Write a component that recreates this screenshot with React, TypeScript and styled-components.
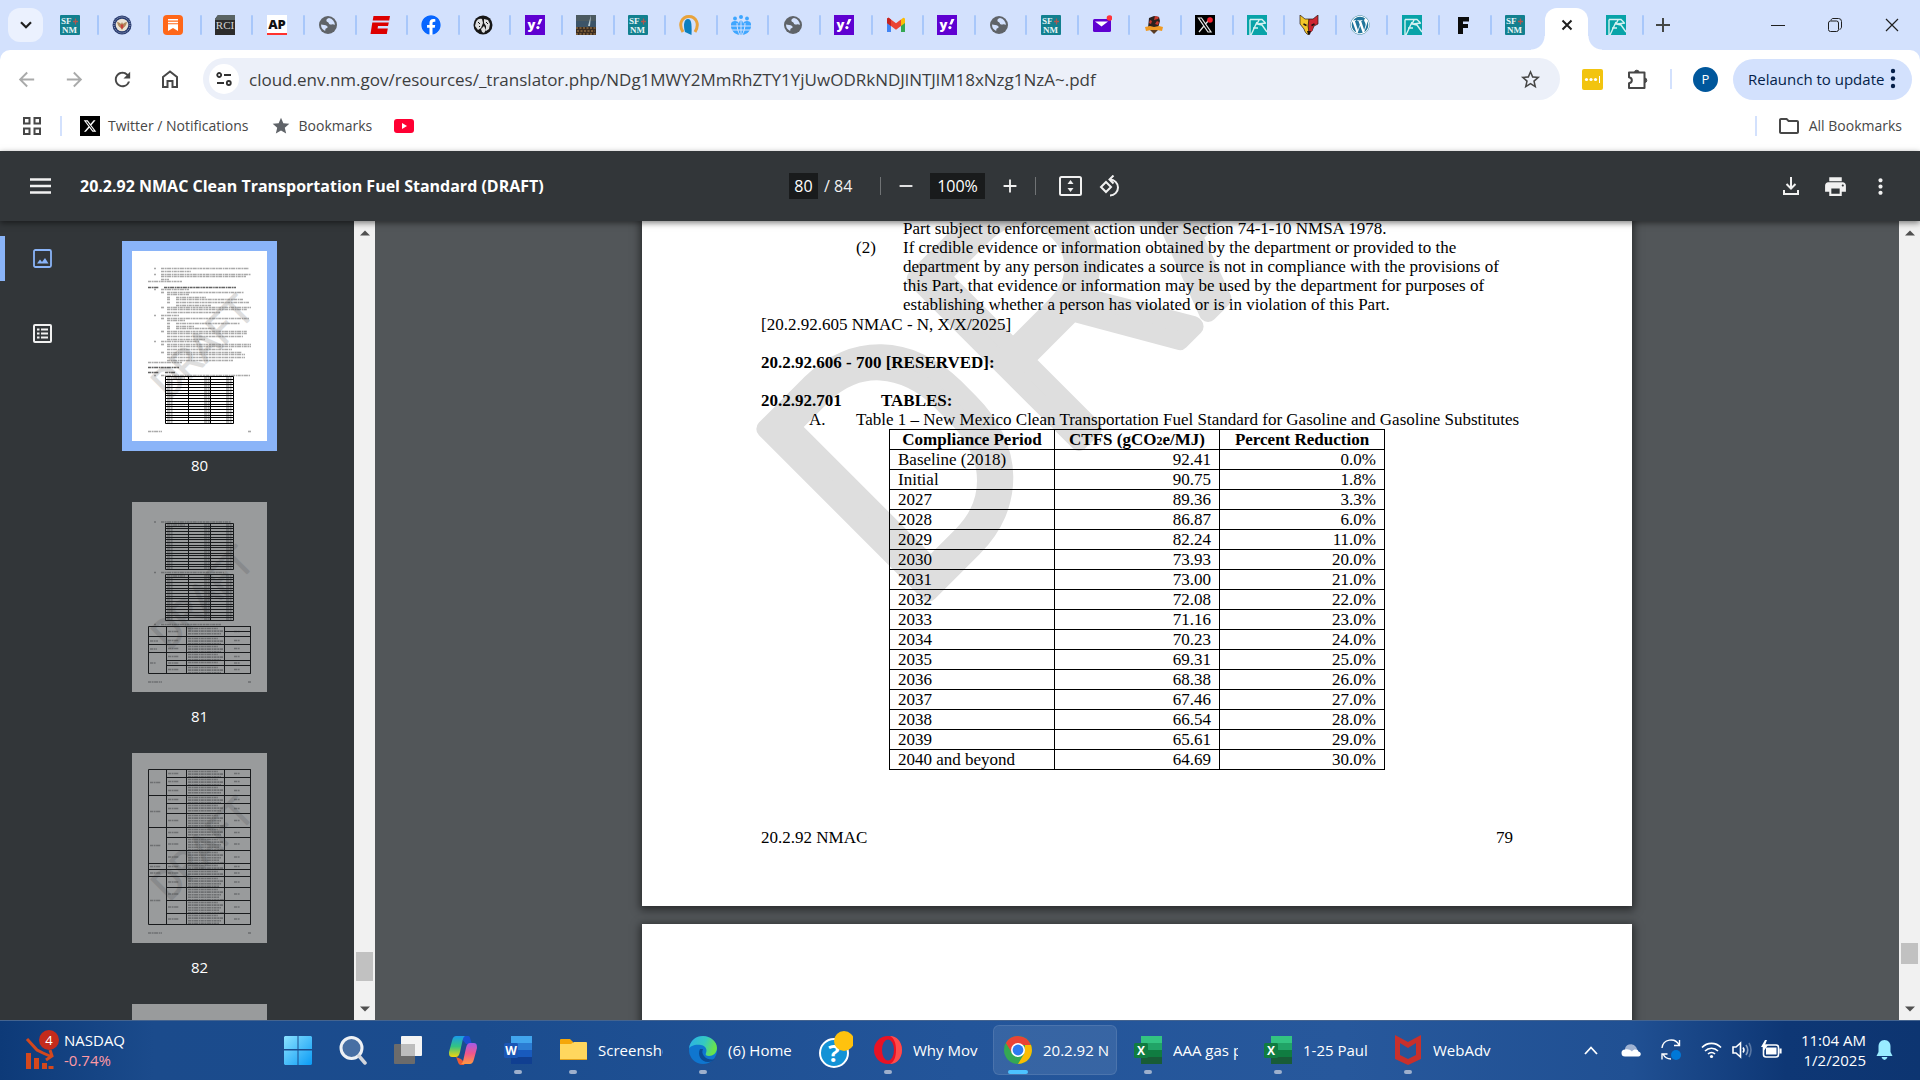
import React from 'react';
import styled, { createGlobalStyle, css } from 'styled-components';
import {
  MdArrowBack,
  MdArrowForward,
  MdRefresh,
  MdStar,
  MdStarBorder,
  MdAdd,
  MdRemove,
  MdMoreVert,
  MdOutlineFolder,
  MdPrint,
} from 'react-icons/md';
import { FaFacebook, FaWordpress } from 'react-icons/fa';
import { FaXTwitter } from 'react-icons/fa6';

const ui = '"Open Sans", "Noto Sans", sans-serif';
const serif = '"Liberation Serif", "Times New Roman", serif';

const GlobalStyle = createGlobalStyle`
  * { box-sizing: border-box; }
  body { margin: 0; font-family: ${ui}; overflow: hidden; }
  button { border: 0; padding: 0; background: none; color: inherit; font: inherit; }
  input { border: 0; padding: 0; margin: 0; font: inherit; color: inherit; outline: none; min-width: 0; }
  a { color: inherit; text-decoration: none; }
  svg { display: block; flex: none; }
`;

const Shell = styled.div`
  display: flex;
  flex-direction: column;
  height: 100vh;
  background: #d3e1fd;
`;

/* ---------- tab strip ---------- */

const TabStrip = styled.header`
  display: flex;
  align-items: flex-end;
  flex: none;
  height: 50px;
`;

const TabSearch = styled.button`
  display: grid;
  place-items: center;
  width: 35px;
  height: 34px;
  margin: 0 4px 8px 8px;
  border-radius: 12px;
  background: #ebf1fe;
`;

const Tabs = styled.nav`
  display: flex;
  flex: 0 1 1597px;
  height: 42px;
`;

const Tab = styled.button<{ $active?: boolean; $divider?: boolean }>`
  position: relative;
  display: flex;
  flex: 1 1 0;
  justify-content: center;
  padding-top: 7px;
  padding-right: 5px;

  ${(p) =>
    p.$divider &&
    css`
      &::after {
        content: '';
        position: absolute;
        right: 0;
        top: 7px;
        width: 2px;
        height: 20px;
        border-radius: 1px;
        background: #a8c7fa;
      }
    `}

  ${(p) =>
    p.$active &&
    css`
      flex: 0 0 43px;
      margin: 0 4px 0 2px;
      padding-right: 0;
      border-radius: 12px 12px 0 0;
      background: #fff;

      &::before,
      &::after {
        content: '';
        position: absolute;
        bottom: 0;
        width: 14px;
        height: 14px;
      }
      &::before {
        right: 100%;
        background: radial-gradient(circle at 0 0, transparent 13px, #fff 14px);
      }
      &::after {
        left: 100%;
        background: radial-gradient(circle at 100% 0, transparent 13px, #fff 14px);
      }
    `}
`;

const NewTab = styled.button`
  display: grid;
  place-items: center;
  width: 38px;
  height: 50px;
  color: #444746;
`;

const WindowButtons = styled.div`
  display: flex;
  margin-left: auto;
`;

const WindowButton = styled.button`
  display: grid;
  place-items: center;
  width: 57px;
  height: 50px;
`;

/* ---------- address bar and bookmarks ---------- */

const Chrome = styled.div`
  flex: none;
  height: 101px;
  background: #fff;
  border-radius: 10px 10px 0 0;
`;

const AddressRow = styled.div`
  display: flex;
  align-items: center;
  height: 58px;
  padding: 0 8px 0 2px;
  color: #474747;
`;

const NavButton = styled.button<{ $faded?: boolean }>`
  display: grid;
  place-items: center;
  width: 48px;
  height: 40px;
  color: ${(p) => (p.$faded ? '#a9aaaa' : '#474747')};
`;

const Omnibox = styled.div`
  display: flex;
  align-items: center;
  flex: 1;
  height: 42px;
  margin-left: 9px;
  padding: 0 18px 0 6px;
  border-radius: 21px;
  background: #ecf0f9;
`;

const SiteInfo = styled.button`
  display: grid;
  place-items: center;
  flex: none;
  width: 30px;
  height: 30px;
  border-radius: 50%;
  background: #fff;
`;

const Address = styled.input`
  flex: 1;
  height: 30px;
  margin-left: 10px;
  background: none;
  font-size: 17px;
  color: #3c3e40;
`;

const Tools = styled.div`
  display: flex;
  align-items: center;
  margin-left: 10px;
`;

const ToolButton = styled.button`
  display: grid;
  place-items: center;
  width: 45px;
  height: 40px;
`;

const Rule = styled.span<{ $space: string }>`
  flex: none;
  width: 2px;
  height: 20px;
  margin: ${(p) => p.$space};
  background: #d3e1fd;
`;

const Avatar = styled.button`
  width: 25px;
  height: 25px;
  border-radius: 50%;
  background: #00579c;
  color: #fff;
  font-size: 13px;
`;

const Relaunch = styled.button`
  display: flex;
  align-items: center;
  justify-content: space-between;
  width: 179px;
  height: 41px;
  margin-left: 15px;
  padding: 0 10px 0 15px;
  border-radius: 21px;
  background: #d3e1fd;
  color: #041e49;
  font-size: 15px;
  white-space: nowrap;
`;

const BookmarkRow = styled.div`
  display: flex;
  align-items: center;
  height: 36px;
  padding: 0 18px 0 23px;
  color: #474747;
  font-size: 14px;
  line-height: 20px;
`;

const Bookmark = styled.a`
  display: flex;
  align-items: center;
  gap: 8px;
  margin-right: 22px;

  &:last-child {
    margin-right: 0;
  }
`;

const Push = styled.span`
  flex: 1;
`;

/* ---------- pdf viewer ---------- */

const PdfToolbar = styled.div`
  position: relative;
  z-index: 2;
  display: grid;
  grid-template-columns: 1fr auto 1fr;
  align-items: center;
  flex: none;
  height: 70px;
  padding: 0 17px 0 29px;
  background: #323639;
  box-shadow: 0 2px 6px rgba(0, 0, 0, 0.5);
  color: #f1f1f1;
`;

const ToolbarLeft = styled.div`
  display: flex;
  align-items: center;
  gap: 27px;
`;

const DocTitle = styled.h1`
  margin: 0;
  font-size: 16px;
  font-weight: 700;
  line-height: 24px;
  white-space: nowrap;
  color: #fff;
`;

const ToolbarMiddle = styled.div`
  display: flex;
  align-items: center;
  margin-right: 13px;
  font-size: 16px;
`;

const ToolbarRight = styled.div`
  display: flex;
  justify-content: flex-end;
`;

const DarkField = styled.input<{ $w: number }>`
  width: ${(p) => p.$w}px;
  height: 26px;
  background: #191b1c;
  color: #fff;
  text-align: center;
`;

const PageTotal = styled.span`
  width: 36px;
  margin-left: 6px;
  white-space: nowrap;
`;

const DarkRule = styled.span<{ $space: string }>`
  width: 1px;
  height: 18px;
  margin: ${(p) => p.$space};
  background: #707375;
`;

const PdfButton = styled.button<{ $w?: number }>`
  display: grid;
  place-items: center;
  width: ${(p) => p.$w ?? 45}px;
  height: 40px;
`;

const Viewer = styled.div`
  display: flex;
  flex: 1;
  min-height: 0;
  background: #525659;
`;

const Sidebar = styled.aside`
  display: flex;
  flex: none;
  width: 354px;
  background: #323639;
  overflow: hidden;
`;

const SideTabs = styled.div`
  display: flex;
  flex-direction: column;
  gap: 30px;
  width: 80px;
  padding-top: 15px;
`;

const SideTab = styled.button<{ $on?: boolean }>`
  display: grid;
  place-items: center;
  height: 45px;
  color: ${(p) => (p.$on ? '#8ab4f8' : '#f1f1f1')};
  border-left: 5px solid ${(p) => (p.$on ? '#8ab4f8' : 'transparent')};
  border-radius: 0 4px 4px 0;
`;

const Thumbs = styled.div`
  display: flex;
  flex-direction: column;
  align-items: center;
  width: 239px;
  padding-top: 30px;
`;

const Thumb = styled.button<{ $on?: boolean }>`
  display: flex;
  flex-direction: column;
  align-items: center;
  flex: none;
  height: 251px;
  color: #fff;
  font-size: 15px;
  line-height: 20px;

  svg {
    margin-bottom: 14px;
    background: #fff;
    outline: ${(p) => (p.$on ? '10px solid #8ab4f8' : 'none')};
    opacity: ${(p) => (p.$on ? 1 : 0.5)};
  }
`;

const Scrollbar = styled.div`
  display: flex;
  flex-direction: column;
  align-items: center;
  flex: none;
  width: 21px;
  padding: 9px 0 8px;
  background: #f1f1f1;
`;

const Handle = styled.div<{ $h: number; $below: number }>`
  width: 17px;
  height: ${(p) => p.$h}px;
  margin-top: auto;
  margin-bottom: ${(p) => p.$below}px;
  background: #c1c1c1;
`;

const Pages = styled.main`
  display: flex;
  flex-direction: column;
  align-items: center;
  gap: 18px;
  flex: 1;
  overflow: hidden;
`;

const Sheet = styled.section`
  position: relative;
  flex: none;
  width: 990px;
  background: #fff;
  box-shadow: 0 2px 8px 2px rgba(0, 0, 0, 0.5);
  color: #000;
  font-family: ${serif};
  font-size: 17px;
  line-height: 19px;
`;

const TextSheet = styled(Sheet)`
  margin-top: -2px;
  padding: 0 119px 59px;
`;

const BlankSheet = styled(Sheet)`
  height: 400px;
`;

const Mark = styled.svg`
  position: absolute;
  left: 0;
  top: 0;
  overflow: hidden;
`;

const Copy = styled.div`
  position: relative;
`;

const Item = styled.div<{ $indent: number; $label: number }>`
  display: grid;
  grid-template-columns: ${(p) => p.$label}px 1fr;
  margin-left: ${(p) => p.$indent}px;
  white-space: nowrap;
`;

const Para = styled.p`
  margin: 0;
`;

const Citation = styled(Para)`
  padding-top: 1px;
`;

const Heading = styled.h2`
  display: flex;
  margin: 19px 0 0;
  font-size: 17px;
  line-height: 19px;

  span {
    width: 120px;
  }
`;

const DataTable = styled.table`
  margin: 0 0 58px 128px;
  width: 496px;
  border-collapse: collapse;
  table-layout: fixed;

  th,
  td {
    height: 20px;
    padding: 0 8px;
    border: 1px solid #000;
    line-height: 19px;
    text-align: right;
    white-space: nowrap;
  }
  th {
    text-align: center;
  }
  td:first-child {
    text-align: left;
  }
`;

const Sub = styled.span`
  font-size: 12px;
  line-height: 1;
`;

const PageFooter = styled.footer`
  display: flex;
  justify-content: space-between;
`;

/* ---------- taskbar ---------- */

const Taskbar = styled.footer`
  position: relative;
  z-index: 3;
  display: flex;
  align-items: center;
  flex: none;
  height: 60px;
  padding-bottom: 1px;
  border-top: 1px solid #45648f;
  background: linear-gradient(90deg, #0d3a78 0, #1b4b8c 8%, #1b4c8e 25%, #23559a 50%, #27589c 70%, #205093 85%, #0e3775 93%, #0d3571 100%);
  color: #fff;
  font-size: 15px;
  line-height: 20px;
`;

const Widget = styled.button`
  display: flex;
  align-items: center;
  gap: 4px;
  flex: none;
  width: 271px;
  padding-left: 24px;
  text-align: left;
`;

const Drop = styled.span`
  display: block;
  color: #ff99a4;
`;

const Apps = styled.div`
  display: flex;
  flex: 1;
  min-width: 0;
`;

const AppButton = styled.button<{ $active?: boolean; $running?: boolean; $wide?: boolean }>`
  position: relative;
  display: flex;
  align-items: center;
  gap: 11px;
  flex: none;
  width: ${(p) => (p.$wide ? 130 : 55)}px;
  height: 50px;
  padding: 0 13px;
  text-align: left;

  ${(p) =>
    p.$running &&
    css`
      &::after {
        content: '';
        position: absolute;
        left: 23px;
        bottom: 1px;
        width: 8px;
        height: 4px;
        border-radius: 2px;
        background: #9eb0cd;
      }
    `}

  ${(p) =>
    p.$active &&
    css`
      width: 124px;
      margin: 0 4px 0 2px;
      padding: 0 5px 0 11px;
      border-radius: 6px;
      background: rgba(255, 255, 255, 0.09);
      box-shadow: inset 0 0 0 1px rgba(255, 255, 255, 0.1);

      &::after {
        left: 15px;
        width: 20px;
        background: #4cc2ff;
      }
    `}
`;

const AppLabel = styled.span`
  width: 66px;
  overflow: hidden;
  white-space: nowrap;
`;

const Tray = styled.div`
  display: flex;
  align-items: center;
  gap: 10px;
  padding-right: 27px;
`;

const TrayButton = styled.button<{ $w: number }>`
  display: grid;
  place-items: center;
  width: ${(p) => p.$w}px;
  height: 40px;
`;

const Clock = styled.button`
  width: 68px;
  text-align: right;
  white-space: nowrap;
`;

/* ---------- favicons ---------- */

const Fav = ({ children }: { children: React.ReactNode }) => (
  <svg width="20" height="20" viewBox="0 0 20 20" aria-hidden="true">
    {children}
  </svg>
);

const SfNm = () => (
  <Fav>
    <rect width="20" height="20" rx="1" fill="#12808f" />
    <text x="1" y="9" fontFamily={serif} fontWeight="700" fontSize="9" fill="#e7f4f5">SF</text>
    <text x="2" y="18" fontFamily={serif} fontWeight="700" fontSize="9" fill="#e7f4f5">NM</text>
    <path d="M15.500 3.500v6M13 6.500h5" stroke="#b0574f" strokeWidth="1.300" />
  </Fav>
);

const Seal = () => (
  <Fav>
    <circle cx="10" cy="10" r="9.500" fill="#26396d" />
    <circle cx="10" cy="10" r="8" fill="none" stroke="#aeb6cf" strokeWidth="1" strokeDasharray="1 1" />
    <circle cx="10" cy="10" r="6.300" fill="#ebe4d5" />
    <path d="M5 7c2 0 3 1 4 2l1-2 1 2c1-1 2-2 4-2-1 4-2 5-3.500 5.500L10 15l-1.500-2.500C7 12 6 11 5 7z" fill="#b08a5c" />
    <path d="M8.700 9.500h2.600v3L10 14l-1.300-1.500z" fill="#c8433c" />
  </Fav>
);

const Substack = () => (
  <Fav>
    <rect width="20" height="20" rx="4" fill="#ff6719" />
    <path d="M5 4.700h10M5 7.500h10" stroke="#fff" strokeWidth="1.400" />
    <path d="M5 9.300h10V16l-5-2.900L5 16z" fill="#fff" />
  </Fav>
);

const Rci = () => (
  <Fav>
    <path d="M3 0h17v20H0V4z" fill="#2c2c2c" />
    <path d="M3 0h17v5H0V4z" fill="#5a6464" />
    <text x="10" y="14" textAnchor="middle" fontFamily={serif} fontSize="11" fill="#d5d5d5">RCI</text>
  </Fav>
);

const Ap = () => (
  <Fav>
    <rect width="20" height="20" fill="#fff" />
    <text x="10" y="13.500" textAnchor="middle" fontFamily={ui} fontWeight="800" fontSize="13" fill="#111">AP</text>
    <rect y="18" width="20" height="2" fill="#ff322e" />
  </Fav>
);

const Globe = () => (
  <Fav>
    <circle cx="10" cy="10" r="9" fill="#5f6368" />
    <path
      d="M11 3c-2 .5-3 1.500-2.500 3 .3 1.200 2 1 2.300 2.200.4 1.500 2 1.600 3.200 1.200 1-.4 2 .2 2.800.6A7 7 0 0 0 11 3zM3 9.500c2 .2 4.500.5 6 1.500 1.200.8.6 2-.6 2.300-1 .3-1.200 1.400-1.200 2.600A7 7 0 0 1 3 9.500z"
      fill="#d3e1fd"
    />
  </Fav>
);

const Espn = () => (
  <Fav>
    <path d="M3.500 1H20l-.8 4.500H2.700zM2.300 7.500h16.500L18 11H8l-.4 2.500h10.200L16.800 19H.5z" fill="#d00" />
  </Fav>
);

const Disc = styled.span`
  width: 20px;
  height: 20px;
  border-radius: 50%;
  background: #fff;
`;

const Facebook = () => (
  <Disc>
    <FaFacebook size={20} color="#0866ff" />
  </Disc>
);

const Face = () => (
  <Fav>
    <circle cx="10" cy="10" r="9.500" fill="#161616" />
    <path d="M3 7c1-3 4-4 6-3l1 4-2 5-3 2-3-4zM11 4l4 1 2 4-1 5-3 2 0-5-2-3zM8 14l3-3 2 4-2 3-2-1z" fill="#dedede" />
    <path d="M5 7l2 2M6 11l1 1M13 7l2 2" stroke="#111" />
  </Fav>
);

const Yahoo = () => (
  <Fav>
    <rect width="20" height="20" fill="#5f01d1" />
    <text x="2.500" y="13.500" fontFamily={ui} fontWeight="800" fontSize="13" fill="#fff">y</text>
    <path d="M12.300 9.500L14.500 4h3l-2.600 5.500z" fill="#fff" />
    <circle cx="12.900" cy="12.600" r="1.600" fill="#fff" />
  </Fav>
);

const Photo = () => (
  <Fav>
    <rect width="20" height="20" fill="#3c5468" />
    <rect width="20" height="6" fill="#4c5a60" />
    <path d="M15 0l-3 11h2z" fill="#b9cbd2" />
    <rect y="12" width="20" height="8" fill="#3a2c20" />
    <path d="M0 13h20M1 16h18M0 19h20" stroke="#8a683f" strokeWidth="1.300" strokeDasharray="2 1.500" />
  </Fav>
);

const Arch = () => (
  <Fav>
    <path d="M4 17C-1 9 3 1.500 10 1.500s11 7.500 6 15.500" fill="none" stroke="#e8a33c" strokeWidth="3" />
    <path d="M6 17C4 10 5 4 9 4c3 0 4 3 3.500 16z" fill="#0b7fc0" />
  </Fav>
);

const PeopleGlobe = () => (
  <Fav>
    <g fill="#3ea6ff">
      <circle cx="4" cy="3.500" r="1.900" />
      <circle cx="10" cy="2" r="2" />
      <circle cx="16" cy="3.500" r="1.900" />
      <path d="M0 9c0-4 8-4 8 0 0-5 4-5 4 0 0-4 8-4 8 0v3c-1 5-5 8-10 8S1 17 0 12z" />
    </g>
    <path d="M0 11h20M1 15h18M6 8c0 5 1 9 3 12M14 8c0 5-1 9-3 12M10 5v15" stroke="#d3e1fd" strokeWidth="1" fill="none" />
  </Fav>
);

const Gmail = () => (
  <Fav>
    <path d="M1 5v12h4V8z" fill="#4285f4" />
    <path d="M19 5v12h-4V8z" fill="#34a853" />
    <path d="M15 4.500L17 3c1-.7 2 .2 2 1.500V8l-4 3z" fill="#fbbc04" />
    <path d="M1 4.500C1 3.200 2 2.300 3 3l7 5.300L17 3l-2 1.500V11l-5 3.700L5 11 1 8z" fill="#ea4335" />
    <path d="M1 4.500V8l4 3V4.500L3 3c-1-.7-2 .2-2 1.500z" fill="#c5221f" />
  </Fav>
);

const Mail = () => (
  <Fav>
    <rect x="1" y="4" width="18" height="13" rx="1.500" fill="#5f01d1" />
    <path d="M3 6.500h13l-6.500 5z" fill="#fff" />
    <circle cx="17.500" cy="3" r="2.800" fill="#ff333a" />
  </Fav>
);

const Knight = () => (
  <Fav>
    <path d="M5 3l5-2 5 1 1 4-2 7H4z" fill="#2a2220" />
    <path d="M11 1l4 1-1 2-4 1zM13 6l2 1-1 3-3-1zM6 5l2 1-1 3-2-1z" fill="#c8382b" />
    <path d="M1 12l5-1 4 1 5-1 4 1-1 4-5-1H7l-5 1z" fill="#f09a22" />
    <path d="M6 15h8l-4 4z" fill="#5b3d24" />
  </Fav>
);

const XTab = () => (
  <Fav>
    <rect width="20" height="20" fill="#000" />
    <path d="M3.500 3h3l9.500 14h-3zM15.500 3L11 8.500M8.500 11.500L4 17" fill="none" stroke="#e9e9e9" strokeWidth="1.200" />
    <circle cx="15" cy="5" r="2.800" fill="#f4212e" />
  </Fav>
);

const Teal = () => (
  <Fav>
    <rect width="20" height="20" fill="#08a3a8" />
    <path d="M3 4.500h12l3 3M3 4.500V20M10 7L4 20M6 13h5M12 5l-2 4 5 1 5 7M11 9l8-1" fill="none" stroke="#d5f1f1" strokeWidth="1.400" />
  </Fav>
);

const Wolf = () => (
  <Fav>
    <path d="M1 0l5 4h4v16c-3-1-4-3-5-6L1 9z" fill="#f3c52a" stroke="#2a1a12" strokeWidth="0.700" />
    <path d="M19 0l-5 4h-4l-1 7 1 6 3-1 2-5 4-2z" fill="#ce2630" stroke="#2a1a12" strokeWidth="0.700" />
    <path d="M10 14l4-3-1 5-3 3z" fill="#ce2630" />
    <path d="M4.500 9l3 1.500M15.500 9l-3 1.500" stroke="#1a1210" strokeWidth="1.400" />
    <path d="M8 16h4l-1 3.500H9z" fill="#1a1210" />
  </Fav>
);

const Wp = () => (
  <Disc>
    <FaWordpress size={20} color="#21759b" />
  </Disc>
);

const BlackF = () => (
  <Fav>
    <path d="M5 2h11v4.500h-6V9h5v4h-5v6H5z" fill="#0c0c0c" />
  </Fav>
);

const TabCross = () => (
  <svg width="20" height="20" viewBox="0 0 20 20" fill="none" stroke="#1f1f1f" strokeWidth="2" aria-hidden="true">
    <path d="M5.500 5.500l9 9M14.500 5.500l-9 9" />
  </svg>
);

const tabs: [string, React.FC][] = [
  ['Santa Fe New Mexican', SfNm],
  ['Seal', Seal],
  ['Substack', Substack],
  ['RCI', Rci],
  ['AP', Ap],
  ['Site', Globe],
  ['ESPN', Espn],
  ['Facebook', Facebook],
  ['Face', Face],
  ['Yahoo', Yahoo],
  ['Photo', Photo],
  ['Santa Fe New Mexican', SfNm],
  ['Arch', Arch],
  ['People', PeopleGlobe],
  ['Site', Globe],
  ['Yahoo', Yahoo],
  ['Gmail', Gmail],
  ['Yahoo', Yahoo],
  ['Site', Globe],
  ['Santa Fe New Mexican', SfNm],
  ['Yahoo Mail', Mail],
  ['Knight', Knight],
  ['X', XTab],
  ['Energy', Teal],
  ['Lobo', Wolf],
  ['WordPress', Wp],
  ['Energy', Teal],
  ['F', BlackF],
  ['Santa Fe New Mexican', SfNm],
  ['Close', TabCross],
  ['Energy', Teal],
];
const activeTab = 29;

/* ---------- thumbnails ---------- */

const DraftMark = ({ x, y, size, stroke }: { x: number; y: number; size: number; stroke: number }) => (
  <text
    x={x}
    y={y}
    transform={`rotate(-45 ${x} ${y})`}
    fontFamily="Roboto, sans-serif"
    fontWeight="300"
    fontSize={size}
    fill="#dedede"
    stroke="#dedede"
    strokeWidth={stroke}
    strokeLinejoin="round"
  >
    DRAFT
  </text>
);

const Line = ({ x, y, w, dark }: { x: number; y: number; w: number; dark?: boolean }) => (
  <path
    d={`M${x} ${y}h${w}`}
    stroke={dark ? '#222' : '#555'}
    strokeWidth="1.600"
    strokeDasharray="3 .6 2 .5 4 .7 1.500 .5"
    opacity={dark ? 0.7 : 0.5}
  />
);

const Grid = ({ x, cols, ys }: { x: number; cols: number[]; ys: number[] }) => {
  const w = cols[cols.length - 1];
  const top = ys[0];
  const end = ys[ys.length - 1];
  return (
    <path
      d={ys.map((y) => `M${x} ${y}h${w}`).join('') + cols.map((c) => `M${x + c} ${top}V${end}`).join('')}
      stroke="#000"
      strokeWidth="1"
      fill="none"
    />
  );
};

const steps = (from: number, to: number, n: number) =>
  Array.from({ length: n + 1 }, (_, i) => Math.round(from + ((to - from) * i) / n) + 0.5);

const page80: [number, number, number, boolean?][] = [
  [22, 17, 2], [29, 17, 88], [29, 20, 30], [22, 23, 2], [29, 23, 90], [29, 25, 85], [29, 28, 8], [16, 30, 34],
  [16, 36, 11, true], [32, 36, 72, true], [22, 38, 2], [29, 38, 28], [29, 41, 3], [35, 41, 77], [35, 43, 22],
  [35, 46, 3], [44, 46, 30], [35, 48, 3], [44, 48, 67], [35, 51, 3], [44, 51, 73], [44, 54, 35], [29, 56, 3],
  [35, 56, 84], [35, 58, 80], [35, 61, 53], [22, 64, 2], [29, 64, 18], [29, 67, 3], [35, 67, 82], [35, 69, 18],
  [35, 72, 3], [44, 72, 64], [35, 75, 3], [44, 75, 18], [35, 77, 3], [44, 77, 39], [29, 80, 3], [35, 80, 80],
  [35, 82, 80], [35, 85, 76], [35, 88, 38], [22, 90, 2], [29, 90, 38], [29, 93, 3], [35, 93, 84], [35, 95, 84],
  [35, 98, 65], [29, 101, 3], [35, 101, 75], [35, 103, 78], [35, 106, 78], [35, 109, 66], [16, 111, 34],
  [16, 116, 31, true], [16, 121, 11, true], [33, 121, 10, true], [22, 124, 2], [29, 124, 89], [16, 180, 14], [116, 180, 3],
];

const rows80 = steps(125, 172, 17);
const rows81a = steps(21, 67, 17);
const rows81b = steps(72, 118, 17);
const rows81c = [124.5, 134.5, 142.5, 150.5, 158.5, 163.5, 171.5];
const rows82 = [16.5, 24.5, 32.5, 42.5, 50.5, 60.5, 74.5, 84.5, 97.5, 110.5, 116.5, 123.5, 134.5, 147.5, 160.5, 171.5];
const groups82 = [16.5, 42.5, 74.5, 110.5, 116.5, 123.5, 171.5];

const Figures = ({ ys }: { ys: number[] }) => (
  <>
    {ys.slice(0, -1).map((y, i) => (
      <g key={i}>
        <Line x={35} y={y + 1.5} w={i ? 6 : 18} />
        <Line x={72} y={y + 1.5} w={6} />
        <Line x={94} y={y + 1.5} w={6} />
      </g>
    ))}
  </>
);

const Pathways = ({ ys }: { ys: number[] }) => (
  <>
    {ys.slice(0, -1).map((y, i) => (
      <g key={i}>
        <Line x={36} y={(y + ys[i + 1]) / 2} w={11} />
        {Array.from({ length: Math.floor((ys[i + 1] - y) / 2.6) }, (_, k) => (
          <Line key={k} x={56} y={y + 2 + k * 2.6} w={30 + ((i * 7 + k * 5) % 7)} />
        ))}
        <Line x={102} y={(y + ys[i + 1]) / 2} w={6} />
      </g>
    ))}
  </>
);

const ThumbArt = ({ page }: { page: number }) => (
  <svg width="135" height="190" viewBox="0 0 135 190" aria-hidden="true">
    {page < 83 && <DraftMark x={37} y={149} size={40} stroke={2} />}
    {page === 80 && (
      <>
        {page80.map(([x, y, w, dark], i) => (
          <Line key={i} x={x} y={y + 0.5} w={w} dark={dark} />
        ))}
        <Figures ys={rows80} />
        <Grid x={33.5} cols={[0, 23, 45, 68]} ys={rows80} />
      </>
    )}
    {page === 81 && (
      <>
        <Line x={22} y={20} w={2} />
        <Line x={29} y={20} w={70} />
        <Figures ys={rows81a} />
        <Grid x={33.5} cols={[0, 23, 45, 68]} ys={rows81a} />
        <Line x={22} y={70.5} w={2} />
        <Line x={29} y={70.5} w={63} />
        <Figures ys={rows81b} />
        <Grid x={33.5} cols={[0, 23, 45, 68]} ys={rows81b} />
        <Line x={22} y={122.5} w={2} />
        <Line x={29} y={122.5} w={60} />
        <Pathways ys={rows81c} />
        <Grid x={16.5} cols={[0, 102]} ys={[124.5, 134.5, 142.5, 150.5, 171.5]} />
        <Grid x={34.5} cols={[0, 20, 58, 84]} ys={rows81c} />
        <path d="M92 129.500h26" stroke="#000" />
        <Line x={18} y={139} w={8} />
        <Line x={18} y={147} w={7} />
        <Line x={18} y={161} w={6} />
      </>
    )}
    {page === 82 && (
      <>
        <Pathways ys={rows82} />
        <Grid x={16.5} cols={[0, 102]} ys={groups82} />
        <Grid x={34.5} cols={[0, 20, 58, 84]} ys={rows82} />
        {groups82.slice(0, -1).map((y, i) => (
          <Line key={i} x={18} y={(y + groups82[i + 1]) / 2} w={11} />
        ))}
      </>
    )}
    {page < 83 && page > 80 && (
      <>
        <Line x={16} y={180} w={14} />
        <Line x={116} y={180} w={3} />
      </>
    )}
  </svg>
);

/* ---------- taskbar icons ---------- */

const Big = ({ children }: { children: React.ReactNode }) => (
  <svg width="28" height="30" viewBox="0 0 28 30" aria-hidden="true">
    {children}
  </svg>
);

const StartIcon = () => (
  <Big>
    <defs>
      <linearGradient id="win" x1="0" y1="0" x2="1" y2="1">
        <stop offset="0" stopColor="#8ce2ff" />
        <stop offset="1" stopColor="#0a9bf5" />
      </linearGradient>
    </defs>
    <path d="M1 1h12.500v13H0V2zM14.500 1H27l1 1v12H14.500zM0 15.500h13.500V30H1l-1-1zM14.500 15.500H28V29l-1 1H14.500z" fill="url(#win)" />
  </Big>
);

const SearchIcon = () => (
  <Big>
    <circle cx="12.500" cy="13" r="10.500" fill="rgba(255,255,255,.2)" stroke="#eef1f5" strokeWidth="3" />
    <path d="M20 21l6 7" stroke="#d3d6dc" strokeWidth="3.500" strokeLinecap="round" />
  </Big>
);

const TaskViewIcon = () => (
  <Big>
    <rect x="0" y="9" width="21" height="20" rx="1" fill="#6b6b6b" />
    <rect x="7" y="1" width="21" height="20" rx="1" fill="#f4f4f4" />
    <path d="M7 9h14v12H7z" fill="#bdbdbd" />
  </Big>
);

const CopilotIcon = () => (
  <Big>
    <defs>
      <linearGradient id="cpa" x1="0" y1="0" x2="0" y2="1">
        <stop offset="0" stopColor="#1a9bea" />
        <stop offset=".5" stopColor="#33c481" />
        <stop offset="1" stopColor="#f4d60d" />
      </linearGradient>
      <linearGradient id="cpb" x1="0" y1="0" x2="0" y2="1">
        <stop offset="0" stopColor="#a35be8" />
        <stop offset=".5" stopColor="#f0568c" />
        <stop offset="1" stopColor="#ff9a3f" />
      </linearGradient>
    </defs>
    <path d="M13 1h6c2 0 2 2 3 5l1 3h-6l-5-6z" fill="#1a4fd0" />
    <path d="M7 22l5 2 4 4-1 2h-3c-3 0-3-4-5-8z" fill="#ee5a34" />
    <path d="M8 1h8c-2 1-2 3-3 7l-2 9c-1 4-2 5-5 5H3c-3 0-3-3-3-5L3 6c1-4 2-5 5-5z" fill="url(#cpa)" />
    <path d="M20 29h-8c2-1 2-3 3-7l2-9c1-4 2-5 5-5h3c3 0 3 3 3 5l-3 11c-1 4-2 5-5 5z" fill="url(#cpb)" />
  </Big>
);

const OfficeIcon = ({ letter, bands, tile }: { letter: string; bands: string[]; tile: string }) => (
  <Big>
    {bands.map((c, i) => (
      <rect key={i} x="7" y={1 + i * 7} width="21" height="7" fill={c} />
    ))}
    <rect x="0" y="8" width="14" height="15" rx="1.500" fill={tile} />
    <text x="7" y="20" textAnchor="middle" fontFamily={ui} fontWeight="700" fontSize="12" fill="#fff">
      {letter}
    </text>
  </Big>
);

const WordIcon = () => <OfficeIcon letter="W" tile="#1a56b5" bands={['#41a5ee', '#2b7cd3', '#185abd', '#103f91']} />;
const ExcelIcon = () => <OfficeIcon letter="X" tile="#107c41" bands={['#33c481', '#21a366', '#107c41', '#185c37']} />;

const FolderIcon = () => (
  <Big>
    <path d="M1 5q0-1 1-1h9l3 3v4H1z" fill="#f5a70a" />
    <path d="M1 9h11l3-2h12q1 0 1 1v16q0 1-1 1H2q-1 0-1-1z" fill="#ffd75e" />
    <path d="M1 24h27v1H1z" fill="#e3a21a" />
  </Big>
);

const EdgeIcon = () => (
  <Big>
    <defs>
      <linearGradient id="edge" x1="0" y1="0" x2="1" y2="0.300">
        <stop offset="0" stopColor="#2bb0ea" />
        <stop offset=".6" stopColor="#35c9c0" />
        <stop offset="1" stopColor="#69e34c" />
      </linearGradient>
    </defs>
    <circle cx="14" cy="15" r="14" fill="#0f76cf" />
    <path d="M0 14C1 5 7 1 14 1s14 5 14 12c0 5-4 8-8 8-3 0-4-1-3-3s1-7-5-8C6 9 1 11 0 14z" fill="url(#edge)" />
    <path d="M11 14c-3 6 1 13 8 13 3 0 5-1 7-3-3 1-8 1-11-3-2-2-2-5-1-7z" fill="#0c4b94" />
  </Big>
);

const HelpIcon = () => (
  <svg width="34" height="38" viewBox="0 0 34 38" aria-hidden="true">
    <circle cx="15" cy="22" r="14" fill="#1292d6" stroke="#fff" strokeWidth="2" />
    <text x="15" y="31" textAnchor="middle" fontFamily={ui} fontWeight="700" fontSize="24" fill="#fff">?</text>
    <circle cx="25" cy="10" r="10" fill="#ffc20e" />
  </svg>
);

const OperaIcon = () => (
  <Big>
    <ellipse cx="14" cy="15" rx="14" ry="14" fill="#e81224" />
    <path d="M16 1c7 0 12 6 12 14s-5 14-12 14c4-2 6-7 6-14S20 3 16 1z" fill="#ff4b4b" />
    <ellipse cx="14" cy="15" rx="6" ry="10.500" fill="#23559a" />
  </Big>
);

const ChromeIcon = () => (
  <Big>
    <circle cx="14" cy="15" r="14" fill="#34a853" />
    <path d="M27 10A14 14 0 0 1 14 29l6-10 1-9z" fill="#fbbc04" />
    <path d="M1.900 8A14 14 0 0 1 27 10H14l-6 8z" fill="#ea4335" />
    <circle cx="14" cy="15" r="7" fill="#fff" />
    <circle cx="14" cy="15" r="5.400" fill="#2d7bf0" />
  </Big>
);

const McAfeeIcon = () => (
  <Big>
    <path d="M1 0l13 7 13-7v24l-13 6-13-6zM6 8v12l8 4 8-4V8l-8 5z" fill="#c8302c" fillRule="evenodd" />
  </Big>
);

const apps: { name: string; icon: React.FC; label?: string; running?: boolean; active?: boolean }[] = [
  { name: 'Start', icon: StartIcon },
  { name: 'Search', icon: SearchIcon },
  { name: 'Task view', icon: TaskViewIcon },
  { name: 'Copilot', icon: CopilotIcon },
  { name: 'Word', icon: WordIcon, running: true },
  { name: 'Files', icon: FolderIcon, label: 'Screenshots', running: true },
  { name: 'Edge', icon: EdgeIcon, label: '(6) Home', running: true },
  { name: 'Help', icon: HelpIcon },
  { name: 'Opera', icon: OperaIcon, label: 'Why Mov', running: true },
  { name: 'Chrome', icon: ChromeIcon, label: '20.2.92 NMAC', running: true, active: true },
  { name: 'Excel', icon: ExcelIcon, label: 'AAA gas p', running: true },
  { name: 'Excel', icon: ExcelIcon, label: '1-25 Paul', running: true },
  { name: 'McAfee', icon: McAfeeIcon, label: 'WebAdv', running: true },
];

const Arrow = ({ up }: { up?: boolean }) => (
  <svg width="10" height="6" viewBox="0 0 10 6" aria-hidden="true">
    <path d={up ? 'M0 5.500L5 .5l5 5z' : 'M0 .5l5 5 5-5z'} fill="#505050" />
  </svg>
);

const data: [string, string, string][] = [
  ['Baseline (2018)', '92.41', '0.0%'],
  ['Initial', '90.75', '1.8%'],
  ['2027', '89.36', '3.3%'],
  ['2028', '86.87', '6.0%'],
  ['2029', '82.24', '11.0%'],
  ['2030', '73.93', '20.0%'],
  ['2031', '73.00', '21.0%'],
  ['2032', '72.08', '22.0%'],
  ['2033', '71.16', '23.0%'],
  ['2034', '70.23', '24.0%'],
  ['2035', '69.31', '25.0%'],
  ['2036', '68.38', '26.0%'],
  ['2037', '67.46', '27.0%'],
  ['2038', '66.54', '28.0%'],
  ['2039', '65.61', '29.0%'],
  ['2040 and beyond', '64.69', '30.0%'],
];

export default function App() {
  return (
    <Shell>
      <GlobalStyle />
      <TabStrip>
        <TabSearch aria-label="Search tabs">
          <svg width="12" height="8" viewBox="0 0 12 8" fill="none" stroke="#1f1f1f" strokeWidth="2.200">
            <path d="M1 1.200l5 5 5-5" />
          </svg>
        </TabSearch>
        <Tabs aria-label="Tabs">
          {tabs.map(([name, Icon], i) => (
            <Tab key={i} aria-label={name} $active={i === activeTab} $divider={i !== activeTab && i !== activeTab - 1}>
              <Icon />
            </Tab>
          ))}
        </Tabs>
        <NewTab aria-label="New tab">
          <svg width="14" height="14" viewBox="0 0 14 14" stroke="currentColor" strokeWidth="2">
            <path d="M7 0v14M0 7h14" />
          </svg>
        </NewTab>
        <WindowButtons>
          <WindowButton aria-label="Minimize">
            <svg width="14" height="14" viewBox="0 0 14 14" stroke="#1f1f1f">
              <path d="M0 7.500h14" />
            </svg>
          </WindowButton>
          <WindowButton aria-label="Restore">
            <svg width="14" height="14" viewBox="0 0 14 14" fill="none" stroke="#1f1f1f">
              <rect x="0.500" y="3" width="10" height="10.500" rx="2" />
              <path d="M3 2.500C3.300 1 4 .5 5 .5h5.500a3 3 0 0 1 3 3V9c0 1-.5 2-2 2.300" />
            </svg>
          </WindowButton>
          <WindowButton aria-label="Close window">
            <svg width="14" height="14" viewBox="0 0 14 14" fill="none" stroke="#1f1f1f" strokeWidth="1.200">
              <path d="M1 1l12 12M13 1L1 13" />
            </svg>
          </WindowButton>
        </WindowButtons>
      </TabStrip>

      <Chrome>
        <AddressRow>
          <NavButton $faded aria-label="Back">
            <MdArrowBack size={23} />
          </NavButton>
          <NavButton $faded aria-label="Forward">
            <MdArrowForward size={23} />
          </NavButton>
          <NavButton aria-label="Reload">
            <MdRefresh size={23} />
          </NavButton>
          <NavButton aria-label="Home">
            <svg width="16" height="18" viewBox="0 0 16 18" fill="none" stroke="currentColor" strokeWidth="2">
              <path d="M1 7l7-5.500L15 7v10h-4.500v-6h-5v6H1z" />
            </svg>
          </NavButton>
          <Omnibox>
            <SiteInfo aria-label="Site information">
              <svg width="16" height="14" viewBox="0 0 16 14" fill="none" stroke="#303030" strokeWidth="1.800">
                <circle cx="3.200" cy="3" r="2" />
                <path d="M8 3h7M1 11h7" />
                <circle cx="12.800" cy="11" r="2" />
              </svg>
            </SiteInfo>
            <Address
              aria-label="Address"
              defaultValue="cloud.env.nm.gov/resources/_translator.php/NDg1MWY2MmRhZTY1YjUwODRkNDJlNTJlM18xNzg1NzA~.pdf"
            />
            <MdStarBorder size={23} />
          </Omnibox>
          <Tools>
            <ToolButton aria-label="Password extension">
              <svg width="21" height="21" viewBox="0 0 21 21">
                <rect width="21" height="21" rx="2" fill="#f2c40f" />
                <path d="M17.500 7v7" stroke="#fff" />
                <g fill="#fff">
                  <circle cx="4.500" cy="10.500" r="1.600" />
                  <circle cx="9" cy="10.500" r="1.600" />
                  <circle cx="13.500" cy="10.500" r="1.600" />
                </g>
              </svg>
            </ToolButton>
            <ToolButton aria-label="Extensions">
              <svg width="22" height="22" viewBox="0 0 22 22" fill="none" stroke="currentColor" strokeWidth="2">
                <path d="M2 4.500h15.500v15.500H2v-4.800c3.800-.6 3.800-5.300 0-5.900z" strokeLinejoin="round" />
                <path d="M7.500 4.500a2.300 2.300 0 0 1 4.600 0zM17.500 10a2.300 2.300 0 0 1 0 4.600z" fill="currentColor" strokeWidth="1" />
              </svg>
            </ToolButton>
            <Rule $space="0 21px 0 10px" />
            <Avatar aria-label="Profile">P</Avatar>
            <Relaunch>
              Relaunch to update
              <svg width="20" height="22" viewBox="0 0 20 22" fill="#041e49">
                <circle cx="9" cy="3" r="2.200" />
                <circle cx="9" cy="10.500" r="2.200" />
                <circle cx="9" cy="18" r="2.200" />
              </svg>
            </Relaunch>
          </Tools>
        </AddressRow>
        <BookmarkRow>
          <svg width="18" height="18" viewBox="0 0 18 18" fill="none" stroke="#474747" strokeWidth="2">
            <path d="M1 1h5.500v5.500H1zM11.500 1H17v5.500h-5.500zM1 11.500h5.500V17H1zM11.500 11.500H17V17h-5.500z" />
          </svg>
          <Rule $space="0 18px 0 19px" />
          <Bookmark href="#">
            <svg width="20" height="20" viewBox="0 0 20 20">
              <rect width="20" height="20" />
              <FaXTwitter x="3" y="3" size={14} color="#fff" />
            </svg>
            Twitter / Notifications
          </Bookmark>
          <Bookmark href="#">
            <MdStar size={20} color="#5f6368" />
            Bookmarks
          </Bookmark>
          <Bookmark href="#" aria-label="YouTube">
            <svg width="20" height="20" viewBox="0 0 20 20">
              <rect y="3" width="20" height="14" rx="3" fill="#ff0033" />
              <path d="M8 7v6l5-3z" fill="#fff" />
            </svg>
          </Bookmark>
          <Push />
          <Rule $space="0 20px 0 0" />
          <Bookmark href="#">
            <MdOutlineFolder size={24} />
            All Bookmarks
          </Bookmark>
        </BookmarkRow>
      </Chrome>

      <PdfToolbar>
        <ToolbarLeft>
          <PdfButton $w={24} aria-label="Menu">
            <svg width="22" height="16" viewBox="0 0 22 16" stroke="currentColor" strokeWidth="2.500">
              <path d="M0 1.500h21M0 8h21M0 14.500h21" />
            </svg>
          </PdfButton>
          <DocTitle>20.2.92 NMAC Clean Transportation Fuel Standard (DRAFT)</DocTitle>
        </ToolbarLeft>
        <ToolbarMiddle>
          <DarkField $w={29} aria-label="Page" defaultValue="80" />
          <PageTotal>/ 84</PageTotal>
          <DarkRule $space="0 0 0 20px" />
          <PdfButton $w={49} aria-label="Zoom out">
            <MdRemove size={22} />
          </PdfButton>
          <DarkField $w={55} aria-label="Zoom" defaultValue="100%" />
          <PdfButton $w={50} aria-label="Zoom in">
            <MdAdd size={22} />
          </PdfButton>
          <DarkRule $space="0 14px 0 0" />
          <PdfButton $w={40} aria-label="Fit to page">
            <svg width="23" height="20" viewBox="0 0 23 20" fill="none" stroke="currentColor" strokeWidth="2">
              <rect x="1" y="1" width="21" height="18" rx="1.500" />
              <path d="M11.500 4L8.500 8h6zM11.500 16l-3-4h6z" fill="currentColor" stroke="none" />
            </svg>
          </PdfButton>
          <PdfButton $w={40} aria-label="Rotate">
            <svg width="22" height="22" viewBox="0 0 22 22" fill="none" stroke="currentColor" strokeWidth="2">
              <path d="M7 7l5 5-5 5-5-5z" />
              <path d="M11 4.500a8 8 0 1 1 0 16" />
              <path d="M14.500 .5L10.500 4.500l4 4" />
            </svg>
          </PdfButton>
        </ToolbarMiddle>
        <ToolbarRight>
          <PdfButton aria-label="Download">
            <svg width="16" height="18" viewBox="0 0 16 18" fill="none" stroke="currentColor" strokeWidth="2">
              <path d="M8 0v11M3.500 7L8 11.500 12.500 7M1 13v4h14v-4" />
            </svg>
          </PdfButton>
          <PdfButton aria-label="Print">
            <MdPrint size={25} />
          </PdfButton>
          <PdfButton aria-label="More">
            <MdMoreVert size={25} />
          </PdfButton>
        </ToolbarRight>
      </PdfToolbar>

      <Viewer>
        <Sidebar>
          <SideTabs>
            <SideTab $on aria-label="Thumbnails">
              <svg width="19" height="19" viewBox="0 0 19 19" fill="none" stroke="currentColor" strokeWidth="1.800">
                <rect x="1" y="1" width="17" height="17" rx="1.500" />
                <path d="M4 14.500l3-4 2 2.500 3-4 3.500 5.500z" fill="currentColor" stroke="none" />
              </svg>
            </SideTab>
            <SideTab aria-label="Outline">
              <svg width="19" height="19" viewBox="0 0 19 19" fill="none" stroke="currentColor" strokeWidth="2">
                <rect x="1" y="1" width="17" height="17" rx="1" />
                <path d="M4 5.500h2.500M8 5.500h7M4 9.500h2.500M8 9.500h7M4 13.500h2.500M8 13.500h7" />
              </svg>
            </SideTab>
          </SideTabs>
          <Thumbs>
            {[80, 81, 82, 83].map((n) => (
              <Thumb key={n} $on={n === 80}>
                <ThumbArt page={n} />
                {n < 83 && n}
              </Thumb>
            ))}
          </Thumbs>
        </Sidebar>
        <Scrollbar>
          <Arrow up />
          <Handle $h={29} $below={25} />
          <Arrow />
        </Scrollbar>
        <Pages>
          <TextSheet>
            <Mark width="990" height="687" viewBox="642 219 990 687" aria-hidden="true">
              <DraftMark x={908} y={613} size={325} stroke={18} />
            </Mark>
            <Copy>
              <Item $indent={95} $label={47}>
                <span />
                <Para>Part subject to enforcement action under Section 74-1-10 NMSA 1978.</Para>
              </Item>
              <Item $indent={95} $label={47}>
                <span>(2)</span>
                <Para>
                  If credible evidence or information obtained by the department or provided to the
                  <br />
                  department by any person indicates a source is not in compliance with the provisions of
                  <br />
                  this Part, that evidence or information may be used by the department for purposes of
                  <br />
                  establishing whether a person has violated or is in violation of this Part.
                </Para>
              </Item>
              <Citation>[20.2.92.605 NMAC - N, X/X/2025]</Citation>
              <Heading>20.2.92.606 - 700 [RESERVED]:</Heading>
              <Heading>
                <span>20.2.92.701</span>TABLES:
              </Heading>
              <Item $indent={48} $label={47}>
                <span>A.</span>
                <Para>Table 1 – New Mexico Clean Transportation Fuel Standard for Gasoline and Gasoline Substitutes</Para>
              </Item>
              <DataTable>
                <thead>
                  <tr>
                    <th>Compliance Period</th>
                    <th>
                      CTFS (gCO<Sub>2</Sub>e/MJ)
                    </th>
                    <th>Percent Reduction</th>
                  </tr>
                </thead>
                <tbody>
                  {data.map((row) => (
                    <tr key={row[0]}>
                      {row.map((cell) => (
                        <td key={cell}>{cell}</td>
                      ))}
                    </tr>
                  ))}
                </tbody>
              </DataTable>
              <PageFooter>
                <span>20.2.92 NMAC</span>
                <span>79</span>
              </PageFooter>
            </Copy>
          </TextSheet>
          <BlankSheet />
        </Pages>
        <Scrollbar>
          <Arrow up />
          <Handle $h={21} $below={42} />
          <Arrow />
        </Scrollbar>
      </Viewer>

      <Taskbar>
        <Widget>
          <svg width="36" height="46" viewBox="0 0 36 46" aria-hidden="true">
            <path d="M3 12l10 11 6 3 9 4M22 33l6-4-2-6" stroke="#d4481d" strokeWidth="3" fill="none" />
            <path d="M4.500 26v16M12.500 31v11M20.500 36v6M27 39v3" stroke="#d4481d" strokeWidth="5" />
            <circle cx="25" cy="13" r="10" fill="#c42b1c" />
            <text x="25" y="18" textAnchor="middle" fontFamily={ui} fontSize="13" fill="#fff">4</text>
          </svg>
          <span>
            NASDAQ
            <Drop>-0.74%</Drop>
          </span>
        </Widget>
        <Apps>
          {apps.map(({ name, icon: Icon, label, running, active }, i) => (
            <AppButton key={i} aria-label={name} $wide={!!label} $running={running} $active={active}>
              <Icon />
              {label && <AppLabel>{label}</AppLabel>}
            </AppButton>
          ))}
        </Apps>
        <Tray>
          <TrayButton $w={30} aria-label="Hidden icons">
            <svg width="14" height="9" viewBox="0 0 14 9" fill="none" stroke="#fff" strokeWidth="1.800">
              <path d="M1 8l6-6.500L13 8" />
            </svg>
          </TrayButton>
          <TrayButton $w={30} aria-label="OneDrive">
            <svg width="20" height="14" viewBox="0 0 20 14">
              <path d="M4 8a6 6 0 0 1 11-4l2 4-9 2z" fill="#9fb2d2" />
              <path d="M4 13.500a3.500 3.500 0 0 1 0-7c3-.5 5 0 7 2 2-3 6-2 6.500 0 3.500 1 2.500 5 0 5z" fill="#fff" />
            </svg>
          </TrayButton>
          <TrayButton $w={30} aria-label="Sync">
            <svg width="22" height="22" viewBox="0 0 22 22" fill="none" stroke="#fff" strokeWidth="1.400">
              <path d="M2 9a9 9 0 0 1 17-3M19.500 1v5.500H14M11 20a9 9 0 0 1-8-5M2 20.500V15h5.500" />
              <circle cx="16" cy="16" r="5" fill="#0078d7" stroke="none" />
            </svg>
          </TrayButton>
          <TrayButton $w={92} aria-label="Network, volume and battery">
            <svg width="84" height="22" viewBox="0 0 84 22" fill="none" stroke="#fff" strokeWidth="1.600">
              <path d="M2 8.500a13 13 0 0 1 19 0M5 12a9 9 0 0 1 13 0M8 15a5 5 0 0 1 7 0" />
              <circle cx="11.500" cy="17.500" r="1.600" fill="#fff" stroke="none" />
              <path d="M33 8h3l4.500-4v14L36 14h-3z" />
              <path d="M43 8.500q2 2.500 0 5" />
              <path d="M46 6q3.500 5 0 10" opacity="0.500" />
              <path d="M49 4q4 7 0 14" opacity="0.300" />
              <rect x="63.500" y="6" width="15" height="12" rx="2.500" />
              <path d="M66 8.500h10.500v7H66z" fill="#fff" stroke="none" />
              <path d="M80.500 9.500v5" strokeWidth="2.200" />
              <path d="M65 1l-4 7h3l-1 5 5-7h-3l2-5z" fill="#fff" stroke="none" />
            </svg>
          </TrayButton>
          <Clock>
            11:04 AM
            <br />
            1/2/2025
          </Clock>
          <svg width="17" height="20" viewBox="0 0 17 20" fill="#99ebff" aria-hidden="true">
            <path d="M8.500 0c4 0 6 3 6 6.500V12l2 4H.5l2-4V6.500C2.500 3 4.500 0 8.500 0zM5.500 17h6q-1 3-3 3t-3-3z" />
          </svg>
        </Tray>
      </Taskbar>
    </Shell>
  );
}
